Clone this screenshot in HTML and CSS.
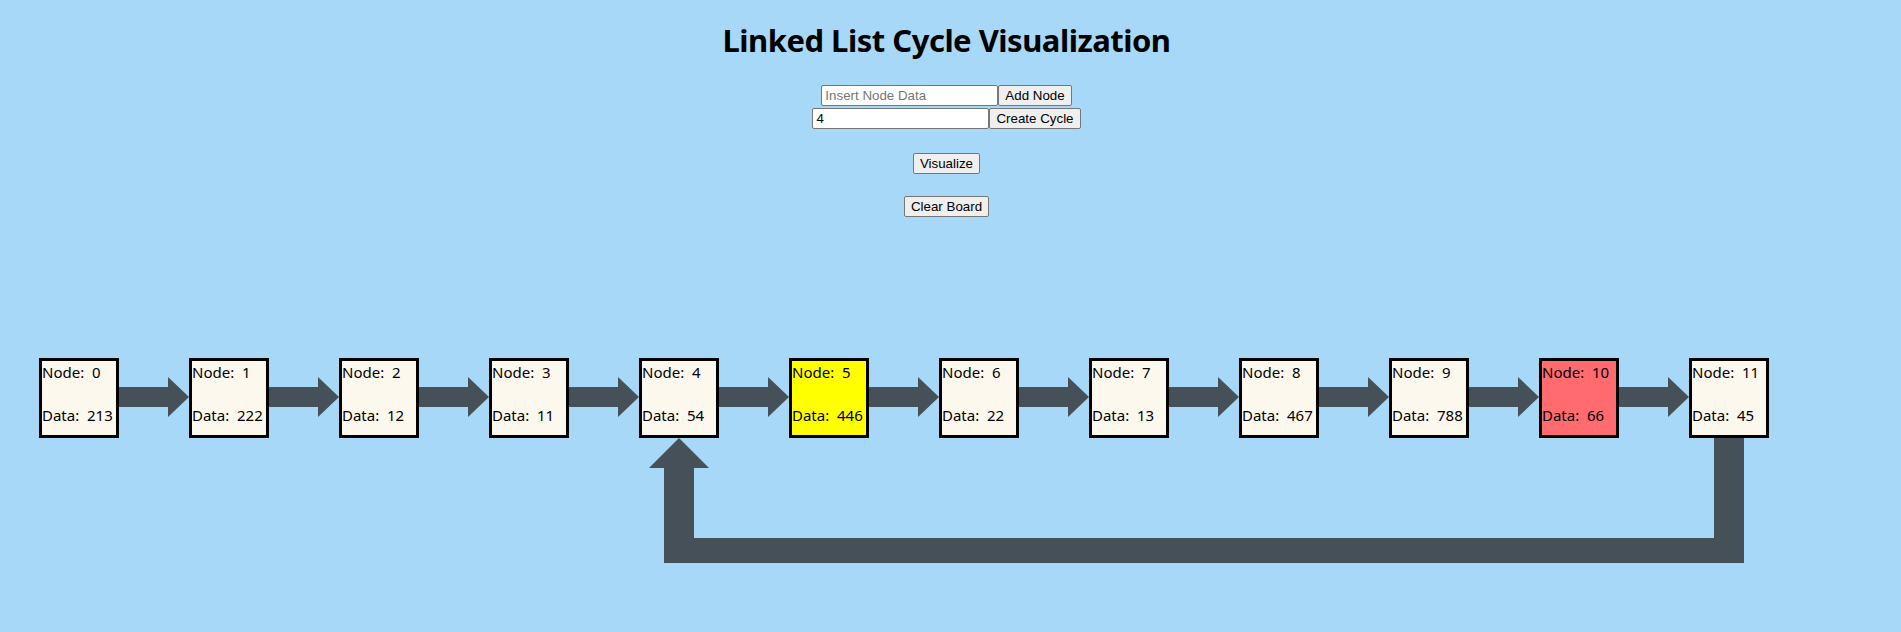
FILE: index.html
```html
<!DOCTYPE html>
<html lang="en">
<head>
  <meta charset="UTF-8">
  <meta name="viewport" content="width=device-width, initial-scale=1.0">
  <title>Linked List Cycle Visualization</title>
  <link rel="stylesheet" href="styles.css">
</head>
<body>
  <h1 class="title">Linked List Cycle Visualization</h1>

  <div class="controls">
    <div class="control-row">
      <input type="text" class="text-input" id="node-data" placeholder="Insert Node Data"><button class="btn" id="add-btn">Add Node</button>
    </div>
    <div class="control-row">
      <input type="text" class="text-input" id="cycle-index" value="4"><button class="btn" id="cycle-btn">Create Cycle</button>
    </div>
    <button class="btn spaced" id="visualize-btn">Visualize</button>
    <button class="btn spaced" id="clear-btn">Clear Board</button>
  </div>

  <div class="board">
    <div class="list">
      <div class="node">Node:&nbsp; 0<br><br>Data:&nbsp; 213</div>
      <div class="link"><span class="shaft"></span><span class="head"></span></div>
      <div class="node">Node:&nbsp; 1<br><br>Data:&nbsp; 222</div>
      <div class="link"><span class="shaft"></span><span class="head"></span></div>
      <div class="node">Node:&nbsp; 2<br><br>Data:&nbsp; 12</div>
      <div class="link"><span class="shaft"></span><span class="head"></span></div>
      <div class="node">Node:&nbsp; 3<br><br>Data:&nbsp; 11</div>
      <div class="link"><span class="shaft"></span><span class="head"></span></div>
      <div class="node">Node:&nbsp; 4<br><br>Data:&nbsp; 54</div>
      <div class="link"><span class="shaft"></span><span class="head"></span></div>
      <div class="node slow">Node:&nbsp; 5<br><br>Data:&nbsp; 446</div>
      <div class="link"><span class="shaft"></span><span class="head"></span></div>
      <div class="node">Node:&nbsp; 6<br><br>Data:&nbsp; 22</div>
      <div class="link"><span class="shaft"></span><span class="head"></span></div>
      <div class="node">Node:&nbsp; 7<br><br>Data:&nbsp; 13</div>
      <div class="link"><span class="shaft"></span><span class="head"></span></div>
      <div class="node">Node:&nbsp; 8<br><br>Data:&nbsp; 467</div>
      <div class="link"><span class="shaft"></span><span class="head"></span></div>
      <div class="node">Node:&nbsp; 9<br><br>Data:&nbsp; 788</div>
      <div class="link"><span class="shaft"></span><span class="head"></span></div>
      <div class="node fast">Node:&nbsp; 10<br><br>Data:&nbsp; 66</div>
      <div class="link"><span class="shaft"></span><span class="head"></span></div>
      <div class="node">Node:&nbsp; 11<br><br>Data:&nbsp; 45</div>
    </div>

    <!-- back link from the tail (node 11) to node 4 -->
    <div class="cycle">
      <div class="cycle-up">
        <span class="cycle-head"></span>
        <span class="cycle-stem"></span>
      </div>
      <div class="cycle-bottom"></div>
      <div class="cycle-down"></div>
    </div>
  </div>
</body>
</html>
```

FILE: styles.css
```css
body {
  margin: 0;
  padding-right: 8px;
  background-color: #a8d8f7;
  font-family: "Noto Sans", "Open Sans", sans-serif;
  color: #000;
}
.title {
  margin: 22px 0 0;
  font-size: 31px;
  line-height: 37px;
  font-weight: 700;
  letter-spacing: -0.5px;
  text-align: center;
}
.controls {
  display: flex;
  flex-direction: column;
  align-items: center;
  margin-top: 26px;
}
.control-row {
  display: flex;
  height: 21px;
  margin-bottom: 2px;
}
.text-input {
  box-sizing: border-box;
  width: 177px;
  height: 21px;
  margin: 0;
  padding: 1px 3px;
  border: 1px solid #767676;
  border-radius: 2px;
  background-color: #fff;
  font-family: "Liberation Sans", Arial, sans-serif;
  font-size: 13.33px;
  color: #000;
}
.text-input::placeholder {
  color: #757575;
}
.btn {
  box-sizing: border-box;
  height: 21px;
  margin: 0;
  padding: 1px 6px;
  border: 1px solid #767676;
  border-radius: 2px;
  background-color: #efefef;
  font-family: "Liberation Sans", Arial, sans-serif;
  font-size: 13.33px;
  color: #000;
  cursor: pointer;
}
.spaced {
  margin-top: 22px;
}
.board {
  position: relative;
  margin-top: 141px;
  padding-left: 39px;
  height: 205px;
}
.list {
  display: flex;
  align-items: center;
}
.node {
  box-sizing: border-box;
  width: 80px;
  height: 80px;
  padding-top: 1px;
  border: 3px solid #000;
  background-color: #fdf8ee;
  font-size: 15px;
  line-height: 21.5px;
  white-space: nowrap;
  overflow: hidden;
}
.node.slow {
  background-color: #ffff00;
}
.node.fast {
  background-color: #ff6b6e;
}
.link {
  display: flex;
  align-items: center;
  width: 70px;
  height: 40px;
  margin-top: -2px;
}
.shaft {
  width: 49px;
  height: 20px;
  background-color: #455058;
}
.head {
  width: 0;
  height: 0;
  border-left: 21px solid #455058;
  border-top: 20px solid transparent;
  border-bottom: 20px solid transparent;
}
.cycle {
  position: absolute;
  left: 649px;
  top: 80px;
  width: 1095px;
  height: 125px;
}
.cycle-up {
  position: absolute;
  left: 0;
  top: 0;
  width: 60px;
  height: 125px;
  display: flex;
  flex-direction: column;
  align-items: center;
}
.cycle-head {
  display: block;
  width: 0;
  height: 0;
  border-bottom: 30px solid #455058;
  border-left: 30px solid transparent;
  border-right: 30px solid transparent;
}
.cycle-stem {
  display: block;
  width: 30px;
  flex: 1;
  background-color: #455058;
}
.cycle-bottom {
  position: absolute;
  left: 15px;
  right: 0;
  bottom: 0;
  height: 25px;
  background-color: #455058;
}
.cycle-down {
  position: absolute;
  right: 0;
  top: 0;
  width: 30px;
  height: 125px;
  background-color: #455058;
}
```
